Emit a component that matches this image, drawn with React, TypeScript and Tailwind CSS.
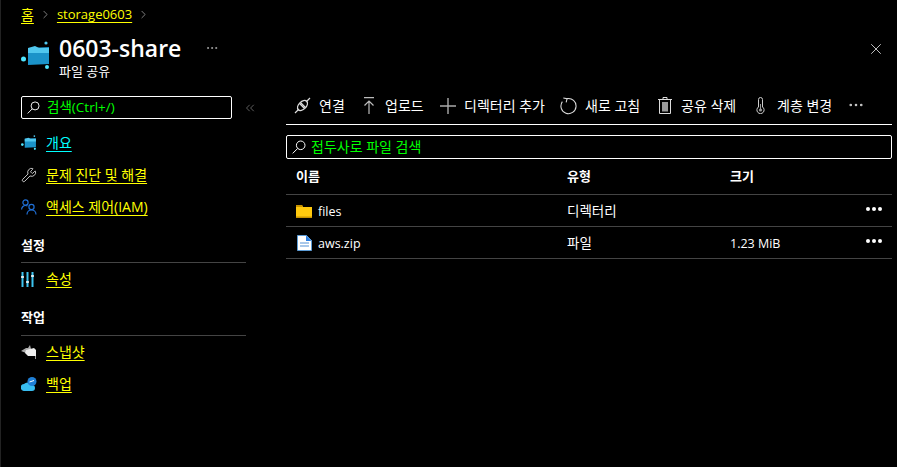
import { ChevronRight, Wrench, ChevronsLeft, X, Ellipsis } from "lucide-react"

const font = { fontFamily: '"Open Sans", "Noto Sans CJK KR", sans-serif' }

function ShareIcon({ size }: { size: number }) {
  return (
    <svg width={size} height={size} viewBox="0 0 30 30" className="shrink-0">
      <path d="M7 7 L28 6 L28 23 L7 24 Z" fill="#1b93c9" />
      <path d="M7 7 L14 5 L18 7 L28 7 L28 12 L7 12 Z" fill="#50c7ee" />
      <circle cx="2.5" cy="18" r="2.5" fill="#50e6ff" />
      <circle cx="25" cy="2" r="1.6" fill="#50c7ee" />
      <circle cx="26" cy="26" r="2" fill="#50e6ff" />
    </svg>
  )
}

function SearchIcon({ size }: { size: number }) {
  return (
    <svg width={size} height={size} viewBox="0 0 14 14" fill="none" stroke="#fff" strokeWidth="1" className="shrink-0">
      <circle cx="8.7" cy="5.3" r="4.3" />
      <path d="M5.7 8.4 L0.7 13.4" />
    </svg>
  )
}

function SideLink({ icon, label, color = "text-[#ffff00]" }: { icon: React.ReactNode; label: string; color?: string }) {
  return (
    <div className="h-8 flex items-center">
      <div className="w-[25px] flex items-center">{icon}</div>
      <span className={`text-sm underline underline-offset-[3px] ${color}`}>{label}</span>
    </div>
  )
}

function ToolButton({ icon, label, width }: { icon: React.ReactNode; label: string; width: string }) {
  return (
    <div className={`flex items-center gap-2 text-white text-sm ${width}`}>
      <span className="w-[17px] flex justify-center">{icon}</span>
      <span className="whitespace-nowrap">{label}</span>
    </div>
  )
}

function Dots() {
  return (
    <div className="flex gap-[2px] ml-auto mr-[10px] -mt-[3px]">
      <span className="w-[4px] h-[4px] rounded-full bg-white" />
      <span className="w-[4px] h-[4px] rounded-full bg-white" />
      <span className="w-[4px] h-[4px] rounded-full bg-white" />
    </div>
  )
}

function Row({ icon, name, type, size }: { icon: React.ReactNode; name: string; type: string; size?: string }) {
  return (
    <div className="h-8 flex items-center border-b border-[#444] text-xs text-white">
      <div className="w-[281px] flex items-center pl-[10px]">
        <span className="w-[22px] flex">{icon}</span>
        <span className="text-[12.5px] mt-[3px]">{name}</span>
      </div>
      <div className="w-[163px] text-[13.5px]">{type}</div>
      <div className="text-[12.5px] mt-[3px]">{size}</div>
      <Dots />
    </div>
  )
}

export default function App() {
  return (
    <div className="w-[897px] h-[467px] bg-black overflow-hidden border-l border-[#222]" style={font}>
      <div className="h-[29px] flex items-center pl-5 text-sm text-[#ffff00]">
        <span className="underline underline-offset-[3px]">홈</span>
        <ChevronRight size={13} strokeWidth={1.5} className="mx-[5px] text-[#999]" />
        <span className="underline underline-offset-[3px] text-[13px]">storage0603</span>
        <ChevronRight size={13} strokeWidth={1.5} className="mx-[5px] text-[#999]" />
      </div>
      <div className="h-[55px] flex pl-5 pr-[12px]">
        <div className="mt-[12px] w-[38px]"><ShareIcon size={30} /></div>
        <div className="pt-[3px]">
          <div className="flex items-center">
            <h1 className="text-[23px] leading-[32px] font-semibold text-white">0603-share</h1>
            <Ellipsis size={14} strokeWidth={1.5} className="ml-6 text-[#aaa]" />
          </div>
          <div className="text-[13px] leading-[14px] text-white">파일 공유</div>
        </div>
        <X size={18} strokeWidth={1} className="ml-auto mt-[11px] text-white" />
      </div>
      <div className="flex">
        <aside className="w-[285px] shrink-0 pl-5 pt-3">
          <div className="flex items-center">
            <div className="w-[211px] shrink-0 h-[23px] border border-white rounded-[2px] flex items-center px-[5px] gap-[7px] text-[13.5px] text-[#00ff00]">
              <SearchIcon size={13} />
              검색(Ctrl+/)
            </div>
            <ChevronsLeft size={14} strokeWidth={1.2} className="ml-[11px] text-[#888]" />
          </div>
          <div className="mt-[8px]">
            <SideLink icon={<ShareIcon size={16} />} label="개요" color="text-[#00ffff]" />
            <SideLink icon={<Wrench size={16} strokeWidth={1.3} className="text-[#e0e0e0]" />} label="문제 진단 및 해결" />
            <SideLink
              icon={
                <svg width="16" height="16" viewBox="0 0 16 16" fill="none" stroke="#1f6fd6" strokeWidth="1.2">
                  <circle cx="4.5" cy="3.5" r="2.6" />
                  <path d="M.6 10.5c0-2 1.6-4 3.9-4 .8 0 1.4.2 2 .6" />
                  <circle cx="10.5" cy="8" r="2.6" />
                  <path d="M6 15.5c0-2.6 2-4.5 4.5-4.5s4.5 1.9 4.5 4.5" />
                </svg>
              }
              label="액세스 제어(IAM)"
            />
          </div>
          <div className="mt-[13px] h-[27px] text-[13px] font-bold text-white border-b border-[#444] w-[225px]">설정</div>
          <SideLink
            icon={
              <svg width="13" height="15" viewBox="0 0 13 15">
                <path d="M1.5 0v15M6.5 0v15M11.5 0v15" stroke="#3cc4f0" strokeWidth="2" />
                <path d="M0 5h3M5 10h3M10 4h3" stroke="#fff" strokeWidth="1.5" />
              </svg>
            }
            label="속성"
          />
          <div className="mt-[13px] h-[28px] text-[13px] font-bold text-white border-b border-[#444] w-[225px]">작업</div>
          <SideLink
            icon={
              <svg width="16" height="14" viewBox="0 0 16 14">
                <path d="M0 6 L5 3 L7 3 L9 0 L10 4 L5 8 Z" fill="#aaa" />
                <path d="M5 5 L13 3 L15 5 L15 11 L7 11 L4 8 Z" fill="#eee" />
                <path d="M14 11h1v3h-1z" fill="#999" />
              </svg>
            }
            label="스냅샷"
          />
          <SideLink
            icon={
              <svg width="16" height="14" viewBox="0 0 16 14">
                <path d="M3.5 14 A3.5 3.5 0 0 1 3 7 A5 5 0 0 1 11 8 A3 3 0 0 1 11 14 Z" fill="#38bdf0" />
                <circle cx="11" cy="4.5" r="4.5" fill="#1f7fd6" />
                <path d="M8.5 5 L13 3.5" stroke="#fff" strokeWidth="1" />
              </svg>
            }
            label="백업"
          />
        </aside>
        <main className="w-[606px]">
          <div className="h-[41px] border-b border-white flex items-center pl-2 pt-[3px]">
            <ToolButton
              width="w-[66px]"
              label="연결"
              icon={
                <svg width="17" height="17" viewBox="0 0 17 17" fill="none" stroke="#ddd" strokeWidth="1.2">
                  <path d="M1 16L5 12M12 5L16 1" />
                  <ellipse cx="8.5" cy="8.5" rx="6" ry="3.8" transform="rotate(-45 8.5 8.5)" />
                  <path d="M5.5 6.5l5 5M6.5 5.5l5 5" />
                </svg>
              }
            />
            <ToolButton
              width="w-[79px]"
              label="업로드"
              icon={
                <svg width="12" height="17" viewBox="0 0 12 17" fill="none" stroke="#bbb" strokeWidth="1.2">
                  <path d="M1 .6h10M6 17V4M1.5 8.5L6 4l4.5 4.5" />
                </svg>
              }
            />
            <ToolButton
              width="w-[121px]"
              label="디렉터리 추가"
              icon={
                <svg width="16" height="16" viewBox="0 0 16 16" stroke="#aaa" strokeWidth="1.4">
                  <path d="M0 8h16M8 0v16" />
                </svg>
              }
            />
            <ToolButton
              width="w-[96px]"
              label="새로 고침"
              icon={
                <svg width="18" height="18" viewBox="0 0 18 18" fill="none" stroke="#ddd" strokeWidth="1.1">
                  <path d="M7.5 1.2 A8 8 0 1 1 2.5 4.4" />
                  <path d="M3.5 .6 L7.5 1.2 L6.5 5.2" />
                </svg>
              }
            />
            <ToolButton
              width="w-[96px]"
              label="공유 삭제"
              icon={
                <svg width="14" height="17" viewBox="0 0 14 17" fill="none">
                  <path d="M1.5 2.5h11v14h-11zM0 2.5h14M5 2.5V.5h4v2" stroke="#ddd" />
                  <rect x="4" y="5" width="6" height="9.5" fill="#999" />
                </svg>
              }
            />
            <ToolButton
              width="w-[95px]"
              label="계층 변경"
              icon={
                <svg width="9" height="17" viewBox="0 0 9 17" fill="none">
                  <path d="M2.5 10V2.5a2 2 0 0 1 4 0V10a3.6 3.6 0 1 1-4 0z" stroke="#ccc" />
                  <path d="M4.5 7v5" stroke="#999" />
                  <circle cx="4.5" cy="13" r="1.6" fill="#999" />
                </svg>
              }
            />
            <Ellipsis size={18} strokeWidth={1.5} className="text-[#ccc] -mt-[2px]" />
          </div>
          <div className="mt-[10px] h-[24px] border border-white rounded-[2px] flex items-center pl-[5px] pb-[1px] gap-[5px] text-sm text-[#00ff00]">
            <SearchIcon size={14} />
            접두사로 파일 검색
          </div>
          <div className="h-[36px] flex items-center border-b border-[#444] text-[13px] font-semibold text-white">
            <div className="w-[281px] pl-[10px]">이름</div>
            <div className="w-[163px]">유형</div>
            <div>크기</div>
          </div>
          <Row
            name="files"
            type="디렉터리"
            icon={
              <svg width="16" height="14" viewBox="0 0 16 14">
                <path d="M0 1h6l1 2h9v11H0z" fill="#ffc90e" />
                <path d="M0 12.5h16V14H0z" fill="#c79200" />
                <path d="M0 1h6l1 2H0z" fill="#c79200" />
              </svg>
            }
          />
          <Row
            name="aws.zip"
            type="파일"
            size="1.23 MiB"
            icon={
              <svg width="15" height="16" viewBox="0 0 15 16" className="ml-[1px]">
                <path d="M.5.5h9l5 5v10H.5z" fill="#fff" stroke="#5b9bd5" />
                <path d="M9 .5l5.5 5.5H9z" fill="#2a7de0" />
                <path d="M3 7h9v2H3zM3 10h9v2H3z" fill="#a9c8ea" />
              </svg>
            }
          />
        </main>
      </div>
    </div>
  )
}
